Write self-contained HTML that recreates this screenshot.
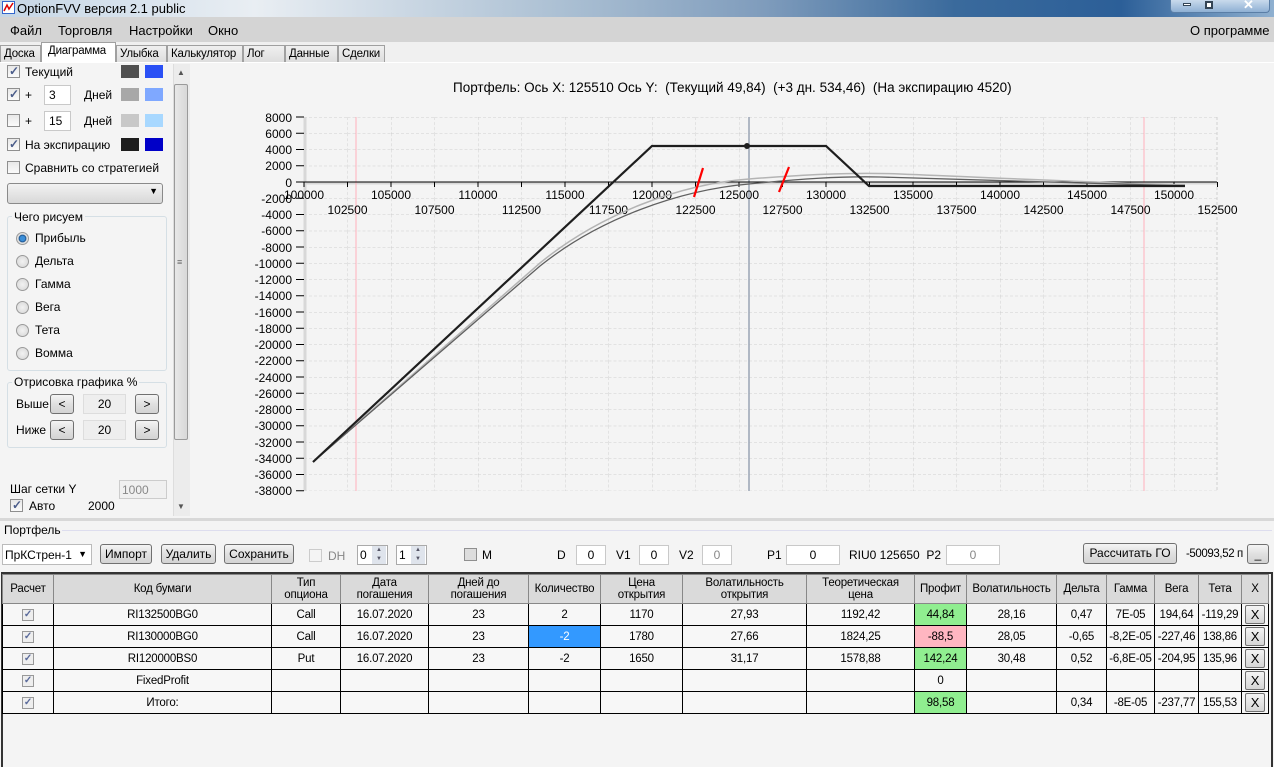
<!DOCTYPE html>
<html><head><meta charset="utf-8"><style>
*{margin:0;padding:0;box-sizing:border-box}
body{width:1274px;height:767px;overflow:hidden;background:#f0f0f0;font-family:"Liberation Sans",sans-serif;font-size:12px;color:#000;position:relative}
.a{position:absolute}
.cb{position:absolute;width:13px;height:13px;border:1px solid #8f8f8f;background:linear-gradient(#e8e8e8,#fafafa)}
.cb.on::after{content:"✓";position:absolute;left:1px;top:-2px;font-size:12px;color:#4a5c8a;font-weight:bold}
.tb{position:absolute;background:#fff;border:1px solid #c9c9c9;height:20px;padding:2px 4px}
.btn{position:absolute;border:1px solid #707070;border-radius:3px;background:linear-gradient(#f4f4f4,#e0e0e0 50%,#d3d3d3);text-align:center;line-height:18px;height:20px}
.rad{position:absolute;width:13px;height:13px;border-radius:50%;border:1px solid #9a9a9a;background:radial-gradient(#f2f2f2,#d5d5d5)}
.tab{position:absolute;top:45px;height:18px;border:1px solid #a0a0a0;border-bottom:none;background:linear-gradient(#f0f0f0,#dcdcdc);line-height:16px;padding:0 3px;font-size:11.5px;letter-spacing:-0.2px;white-space:nowrap;overflow:hidden}
table{border-collapse:collapse;position:absolute;left:2px;top:574px;font-size:11.5px;letter-spacing:-0.2px}
td{border:1px solid #000;text-align:center;height:22px;padding:0;background:#f7f7f7}
tr.h td{background:#dadada;height:29px;line-height:12px;border-color:#888}
.g{background:#90ee90!important}.r{background:#ffb6c1!important}.s{background:#3399ff!important;color:#fff}
.x{display:inline-block;width:20px;height:19px;border:1px solid #707070;border-radius:2px;background:linear-gradient(#f4f4f4,#d6d6d6);line-height:17px;font-size:13px}
.ck{display:inline-block;width:12px;height:12px;border:1px solid #999;background:#eee;color:#5a6a9a;font-size:10px;line-height:10px;font-weight:bold}
</style></head><body>
<!-- title bar -->
<div class="a" style="left:0;top:0;width:1274px;height:17px;background:linear-gradient(90deg,#c5d6e6 0,#e9eef3 20%,#a9bed2 45%,#7f9cbc 60%,#3a6a9c 75%,#2c5f98 88%,#8fb0d0 100%)"></div>
<div class="a" style="left:2px;top:1px;width:13px;height:13px;background:#fff;border:1px solid #36c"><svg width="11" height="11"><path d="M1 9 L4 3 L6 7 L10 1" stroke="#d00" fill="none" stroke-width="1.5"/></svg></div>
<div class="a" style="left:17px;top:1px;font-size:13px">OptionFVV версия 2.1 public</div>
<div class="a" style="left:1170px;top:0;width:100px;height:13px;border:1px solid #5a7ea6;border-top:none;border-radius:0 0 4px 4px;background:linear-gradient(#c9daec,#8fb0d4)"></div>
<div class="a" style="left:1183px;top:3px;width:8px;height:3px;background:#fff;border:1px solid #345"></div>
<div class="a" style="left:1205px;top:1px;width:8px;height:8px;border:2px solid #345;background:#fff"></div>
<div class="a" style="left:1243px;top:-3px;color:#fff;font-size:13px;font-weight:bold">✕</div>
<!-- menu -->
<div class="a" style="left:0;top:17px;width:1274px;height:25px;background:#d4d4d4"></div>
<div class="a" style="left:10px;top:23px;font-size:13px">Файл</div>
<div class="a" style="left:58px;top:23px;font-size:13px">Торговля</div>
<div class="a" style="left:129px;top:23px;font-size:13px">Настройки</div>
<div class="a" style="left:208px;top:23px;font-size:13px">Окно</div>
<div class="a" style="left:1190px;top:23px;font-size:13px">О программе</div>
<!-- tabs -->
<div class="a" style="left:0;top:42px;width:1274px;height:21px;background:#f0f0f0"></div>
<div class="tab" style="left:0;width:41px">Доска</div>
<div class="tab" style="left:41px;top:42px;height:21px;width:75px;background:#fff;padding-left:6px">Диаграмма</div>
<div class="tab" style="left:116px;width:51px">Улыбка</div>
<div class="tab" style="left:167px;width:76px">Калькулятор</div>
<div class="tab" style="left:243px;width:42px">Лог</div>
<div class="tab" style="left:285px;width:53px">Данные</div>
<div class="tab" style="left:338px;width:47px">Сделки</div>
<div class="a" style="left:0;top:62px;width:1274px;height:456px;background:#f4f4f4;border-top:1px solid #fff"></div>
<!-- left panel -->
<div class="cb on" style="left:7px;top:65px"></div><div class="a" style="left:25px;top:65px">Текущий</div>
<div class="a" style="left:121px;top:65px;width:18px;height:13px;background:#505050"></div><div class="a" style="left:145px;top:65px;width:18px;height:13px;background:#2a50f5"></div>
<div class="cb on" style="left:7px;top:88px"></div><div class="a" style="left:25px;top:88px">+</div><div class="tb" style="left:44px;top:85px;width:27px">3</div><div class="a" style="left:84px;top:88px">Дней</div>
<div class="a" style="left:121px;top:88px;width:18px;height:13px;background:#a8a8a8"></div><div class="a" style="left:145px;top:88px;width:18px;height:13px;background:#7fa8ff"></div>
<div class="cb" style="left:7px;top:114px"></div><div class="a" style="left:25px;top:114px">+</div><div class="tb" style="left:44px;top:111px;width:27px">15</div><div class="a" style="left:84px;top:114px">Дней</div>
<div class="a" style="left:121px;top:114px;width:18px;height:13px;background:#c8c8c8"></div><div class="a" style="left:145px;top:114px;width:18px;height:13px;background:#a8d8ff"></div>
<div class="cb on" style="left:7px;top:138px"></div><div class="a" style="left:25px;top:138px">На экспирацию</div>
<div class="a" style="left:121px;top:138px;width:18px;height:13px;background:#1e1e1e"></div><div class="a" style="left:145px;top:138px;width:18px;height:13px;background:#0000c8"></div>
<div class="cb" style="left:7px;top:161px"></div><div class="a" style="left:25px;top:161px">Сравнить со стратегией</div>
<div class="a" style="left:7px;top:183px;width:156px;height:21px;border:1px solid #8a8a8a;border-radius:3px;background:linear-gradient(#f2f2f2,#d8d8d8)"><span class="a" style="right:4px;top:2px;font-size:9px">▼</span></div>
<div class="a" style="left:7px;top:216px;width:160px;height:155px;border:1px solid #d5dfe5;border-radius:3px"></div>
<div class="a" style="left:12px;top:210px;background:#f4f4f4;padding:0 2px">Чего рисуем</div>
<div class="rad" style="left:16px;top:232px;background:radial-gradient(#3a8ed8 30%,#1a4f8a 45%,#e0e0e0 55%)"></div><div class="a" style="left:35px;top:231px">Прибыль</div>
<div class="rad" style="left:16px;top:255px"></div><div class="a" style="left:35px;top:254px">Дельта</div>
<div class="rad" style="left:16px;top:278px"></div><div class="a" style="left:35px;top:277px">Гамма</div>
<div class="rad" style="left:16px;top:301px"></div><div class="a" style="left:35px;top:300px">Вега</div>
<div class="rad" style="left:16px;top:324px"></div><div class="a" style="left:35px;top:323px">Тета</div>
<div class="rad" style="left:16px;top:347px"></div><div class="a" style="left:35px;top:346px">Вомма</div>
<div class="a" style="left:7px;top:382px;width:160px;height:66px;border:1px solid #d5dfe5;border-radius:3px"></div>
<div class="a" style="left:12px;top:375px;background:#f4f4f4;padding:0 2px">Отрисовка графика %</div>
<div class="a" style="left:16px;top:397px">Выше</div><div class="btn" style="left:50px;top:394px;width:24px">&lt;</div><div class="a" style="left:83px;top:394px;width:43px;height:20px;background:#eee;border:1px solid #ddd;text-align:center;line-height:18px">20</div><div class="btn" style="left:135px;top:394px;width:24px">&gt;</div>
<div class="a" style="left:16px;top:423px">Ниже</div><div class="btn" style="left:50px;top:420px;width:24px">&lt;</div><div class="a" style="left:83px;top:420px;width:43px;height:20px;background:#eee;border:1px solid #ddd;text-align:center;line-height:18px">20</div><div class="btn" style="left:135px;top:420px;width:24px">&gt;</div>
<div class="a" style="left:10px;top:482px">Шаг сетки Y</div><div class="a" style="left:119px;top:480px;width:48px;height:19px;border:1px solid #ccc;background:#f0f0f0;color:#888;padding:2px">1000</div>
<div class="cb on" style="left:10px;top:499px"></div><div class="a" style="left:29px;top:499px">Авто</div><div class="a" style="left:88px;top:499px">2000</div>
<!-- scrollbar -->
<div class="a" style="left:173px;top:64px;width:17px;height:452px;background:#ececec;border-left:1px solid #ddd"></div>
<div class="a" style="left:177px;top:68px;font-size:8px;color:#555">▲</div>
<div class="a" style="left:174px;top:84px;width:14px;height:356px;border:1px solid #9a9a9a;border-radius:2px;background:linear-gradient(90deg,#e8e8e8,#d8d8d8)"></div>
<div class="a" style="left:177px;top:257px;font-size:9px;color:#666">≡</div>
<div class="a" style="left:177px;top:502px;font-size:8px;color:#555">▼</div>
<!-- chart -->
<div class="a" style="left:453px;top:80px;font-size:13.5px;white-space:nowrap">Портфель: Ось X: 125510 Ось Y:&nbsp; (Текущий 49,84)&nbsp; (+3 дн. 534,46)&nbsp; (На экспирацию 4520)</div>
<svg class="a" style="left:0;top:0" width="1274" height="520" font-family="Liberation Sans" font-size="12">
<defs><pattern id="gr" x="304" y="117" width="43.5" height="16.25" patternUnits="userSpaceOnUse"><path d="M0 0H43.5M0 0V16.25" stroke="#cfcfcf" stroke-dasharray="3,2" fill="none"/></pattern></defs>
<rect x="304" y="117" width="913" height="374" fill="url(#gr)"/>
<line x1="1217" y1="117" x2="1217" y2="491" stroke="#cfcfcf" stroke-dasharray="3,2"/>
<line x1="305" y1="117" x2="305" y2="491" stroke="#d8d8d8" stroke-width="3"/>
<line x1="304" y1="183" x2="1217" y2="183" stroke="#d8d8d8" stroke-width="3"/>
<line x1="356" y1="117" x2="356" y2="491" stroke="#ffb0bb"/>
<line x1="1144" y1="117" x2="1144" y2="491" stroke="#ffb0bb"/>
<line x1="749" y1="117" x2="749" y2="491" stroke="#9aa4b4" stroke-width="1.5"/>
<path d="M304 182H1217M304 182v5M347.5 182v5M391 182v5M434.5 182v5M478 182v5M521.5 182v5M565 182v5M608.5 182v5M652 182v5M695.5 182v5M739 182v5M782.5 182v5M826 182v5M869.5 182v5M913 182v5M956.5 182v5M1000 182v5M1043.5 182v5M1087 182v5M1130.5 182v5M1174 182v5M1217.5 182v5" stroke="#000"/>
<path d="M296 117h8M296 133.25h8M296 149.5h8M296 165.75h8M296 182h8M296 198.25h8M296 214.5h8M296 230.75h8M296 247h8M296 263.25h8M296 279.5h8M296 295.75h8M296 312h8M296 328.25h8M296 344.5h8M296 360.75h8M296 377h8M296 393.25h8M296 409.5h8M296 425.75h8M296 442h8M296 458.25h8M296 474.5h8M296 490.75h8" stroke="#000"/>
<g text-anchor="end">
<text x="292" y="122">8000</text><text x="292" y="138">6000</text><text x="292" y="154">4000</text><text x="292" y="170">2000</text><text x="292" y="187">0</text><text x="292" y="203">-2000</text><text x="292" y="219">-4000</text><text x="292" y="235">-6000</text><text x="292" y="252">-8000</text><text x="292" y="268">-10000</text><text x="292" y="284">-12000</text><text x="292" y="300">-14000</text><text x="292" y="317">-16000</text><text x="292" y="333">-18000</text><text x="292" y="349">-20000</text><text x="292" y="365">-22000</text><text x="292" y="382">-24000</text><text x="292" y="398">-26000</text><text x="292" y="414">-28000</text><text x="292" y="430">-30000</text><text x="292" y="447">-32000</text><text x="292" y="463">-34000</text><text x="292" y="479">-36000</text><text x="292" y="495">-38000</text>
</g>
<g text-anchor="middle">
<text x="304" y="199">100000</text><text x="391" y="199">105000</text><text x="478" y="199">110000</text><text x="565" y="199">115000</text><text x="652" y="199">120000</text><text x="739" y="199">125000</text><text x="826" y="199">130000</text><text x="913" y="199">135000</text><text x="1000" y="199">140000</text><text x="1087" y="199">145000</text><text x="1174" y="199">150000</text>
<text x="347.5" y="214">102500</text><text x="434.5" y="214">107500</text><text x="521.5" y="214">112500</text><text x="608.5" y="214">117500</text><text x="695.5" y="214">122500</text><text x="782.5" y="214">127500</text><text x="869.5" y="214">132500</text><text x="956.5" y="214">137500</text><text x="1043.5" y="214">142500</text><text x="1130.5" y="214">147500</text><text x="1217.5" y="214">152500</text>
</g>
<path d="M314 461 L540 263 C600 214 680 184 749 179 C800 175 850 172 900 174 C1000 178 1100 183 1185 185" stroke="#b4b4b4" stroke-width="1.5" fill="none"/>
<path d="M313 462 L540 266 C600 218 680 190 749 184 C800 179 840 176 880 177 C960 180 1060 183 1185 186" stroke="#606060" stroke-width="1.3" fill="none"/>
<path d="M313 462 L652 146 L826 146 L869 186 L1185 186" stroke="#1e1e1e" stroke-width="2.2" fill="none"/>
<circle cx="747" cy="146" r="3" fill="#1e1e1e"/>
<path d="M694 197 L703 168 M779 192 L789 167" stroke="#f00" stroke-width="2.2"/>
</svg>
<!-- portfolio -->
<div class="a" style="left:0;top:518px;width:1274px;height:3px;background:#d8d8d8"></div>
<div class="a" style="left:0;top:521px;width:1274px;height:246px;background:#f4f4f4"></div>
<div class="a" style="left:4px;top:523px">Портфель</div>
<div class="a" style="left:62px;top:530px;width:1210px;border-top:1px solid #dde"></div>
<div class="a" style="left:2px;top:544px;width:90px;height:21px;background:#fff;border:1px solid #bbb;padding:3px 2px">ПрКСтрен-1<span class="a" style="right:4px;top:4px;font-size:9px">▼</span></div>
<div class="btn" style="left:100px;top:544px;width:52px">Импорт</div>
<div class="btn" style="left:161px;top:544px;width:55px">Удалить</div>
<div class="btn" style="left:224px;top:544px;width:70px">Сохранить</div>
<div class="cb" style="left:309px;top:549px;border-color:#ccc;background:#f4f4f4"></div><div class="a" style="left:328px;top:549px;color:#888">DH</div>
<div class="a" style="left:357px;top:545px;width:31px;height:20px;border:1px solid #aaa;background:#fff;padding:2px">0</div><div class="a" style="left:372px;top:546px;width:14px;height:18px;background:#dfe4ec;font-size:6px;text-align:center;color:#556;line-height:9px">▲<br>▼</div>
<div class="a" style="left:396px;top:545px;width:31px;height:20px;border:1px solid #aaa;background:#fff;padding:2px">1</div><div class="a" style="left:411px;top:546px;width:14px;height:18px;background:#dfe4ec;font-size:6px;text-align:center;color:#556;line-height:9px">▲<br>▼</div>
<div class="cb" style="left:464px;top:548px;background:#ddd"></div><div class="a" style="left:482px;top:548px">M</div>
<div class="a" style="left:557px;top:548px">D</div><div class="tb" style="left:576px;top:545px;width:30px;text-align:center">0</div>
<div class="a" style="left:616px;top:548px">V1</div><div class="tb" style="left:639px;top:545px;width:30px;text-align:center">0</div>
<div class="a" style="left:679px;top:548px">V2</div><div class="tb" style="left:702px;top:545px;width:30px;text-align:center;color:#888">0</div>
<div class="a" style="left:767px;top:548px">P1</div><div class="tb" style="left:786px;top:545px;width:54px;text-align:center">0</div>
<div class="a" style="left:849px;top:548px">RIU0 125650&nbsp; P2</div><div class="tb" style="left:946px;top:545px;width:54px;text-align:center;color:#888">0</div>
<div class="btn" style="left:1083px;top:543px;width:94px;height:21px">Рассчитать ГО</div>
<div class="a" style="left:1186px;top:548px;font-size:11.5px;letter-spacing:-0.4px;white-space:nowrap">-50093,52 п</div>
<div class="btn" style="left:1247px;top:544px;width:22px">_</div>
<div class="a" style="left:1px;top:572px;width:1272px;height:195px;border:2px solid #333;border-bottom:none;background:#f4f4f4"></div>
<table>
<colgroup><col width="51"><col width="218"><col width="69"><col width="88"><col width="100"><col width="72"><col width="82"><col width="124"><col width="108"><col width="52"><col width="90"><col width="50"><col width="48"><col width="44"><col width="43"><col width="27"></colgroup>
<tr class="h"><td>Расчет</td><td>Код бумаги</td><td>Тип<br>опциона</td><td>Дата<br>погашения</td><td>Дней до<br>погашения</td><td>Количество</td><td>Цена<br>открытия</td><td>Волатильность<br>открытия</td><td>Теоретическая<br>цена</td><td>Профит</td><td>Волатильность</td><td>Дельта</td><td>Гамма</td><td>Вега</td><td>Тета</td><td>X</td></tr>
<tr><td><span class="ck">✓</span></td><td>RI132500BG0</td><td>Call</td><td>16.07.2020</td><td>23</td><td>2</td><td>1170</td><td>27,93</td><td>1192,42</td><td class="g">44,84</td><td>28,16</td><td>0,47</td><td>7E-05</td><td>194,64</td><td>-119,29</td><td><span class="x">X</span></td></tr>
<tr><td><span class="ck">✓</span></td><td>RI130000BG0</td><td>Call</td><td>16.07.2020</td><td>23</td><td class="s">-2</td><td>1780</td><td>27,66</td><td>1824,25</td><td class="r">-88,5</td><td>28,05</td><td>-0,65</td><td>-8,2E-05</td><td>-227,46</td><td>138,86</td><td><span class="x">X</span></td></tr>
<tr><td><span class="ck">✓</span></td><td>RI120000BS0</td><td>Put</td><td>16.07.2020</td><td>23</td><td>-2</td><td>1650</td><td>31,17</td><td>1578,88</td><td class="g">142,24</td><td>30,48</td><td>0,52</td><td>-6,8E-05</td><td>-204,95</td><td>135,96</td><td><span class="x">X</span></td></tr>
<tr><td><span class="ck">✓</span></td><td>FixedProfit</td><td></td><td></td><td></td><td></td><td></td><td></td><td></td><td>0</td><td></td><td></td><td></td><td></td><td></td><td><span class="x">X</span></td></tr>
<tr><td><span class="ck">✓</span></td><td>Итого:</td><td></td><td></td><td></td><td></td><td></td><td></td><td></td><td class="g">98,58</td><td></td><td>0,34</td><td>-8E-05</td><td>-237,77</td><td>155,53</td><td><span class="x">X</span></td></tr>
</table>
</body></html>
